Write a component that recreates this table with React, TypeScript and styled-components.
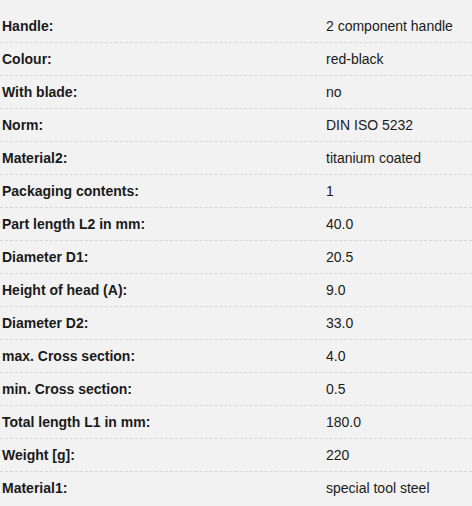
import React from "react";
import styled, { createGlobalStyle } from "styled-components";

const GlobalStyle = createGlobalStyle`
  html, body {
    margin: 0;
    padding: 0;
    background: #f2f2f2;
  }
  body {
    font-family: "Liberation Sans", Arial, sans-serif;
    font-size: 14px;
    color: #1a1a1a;
  }
`;

const SSpecs = styled.div`
  width: 100%;
  padding-top: 10px;
`;

const SRow = styled.div<{ last?: boolean }>`
  display: grid;
  grid-template-columns: 324px 1fr;
  align-items: center;
  height: 32px;
  border-bottom: 1px dashed ${(p) => (p.last ? "transparent" : "#d6d6d6")};
`;

const SLabel = styled.div`
  padding-left: 2px;
  font-weight: 700;
`;

const SValue = styled.div`
  padding-left: 2px;
`;

const specs: [string, string][] = [
  ["Handle:", "2 component handle"],
  ["Colour:", "red-black"],
  ["With blade:", "no"],
  ["Norm:", "DIN ISO 5232"],
  ["Material2:", "titanium coated"],
  ["Packaging contents:", "1"],
  ["Part length L2 in mm:", "40.0"],
  ["Diameter D1:", "20.5"],
  ["Height of head (A):", "9.0"],
  ["Diameter D2:", "33.0"],
  ["max. Cross section:", "4.0"],
  ["min. Cross section:", "0.5"],
  ["Total length L1 in mm:", "180.0"],
  ["Weight [g]:", "220"],
  ["Material1:", "special tool steel"],
];

function App(): React.ReactElement {
  return (
    <>
      <GlobalStyle />
      <SSpecs>
        {specs.map(([label, value], i) => (
          <SRow key={label} last={i === specs.length - 1}>
            <SLabel>{label}</SLabel>
            <SValue>{value}</SValue>
          </SRow>
        ))}
      </SSpecs>
    </>
  );
}

export default App;
